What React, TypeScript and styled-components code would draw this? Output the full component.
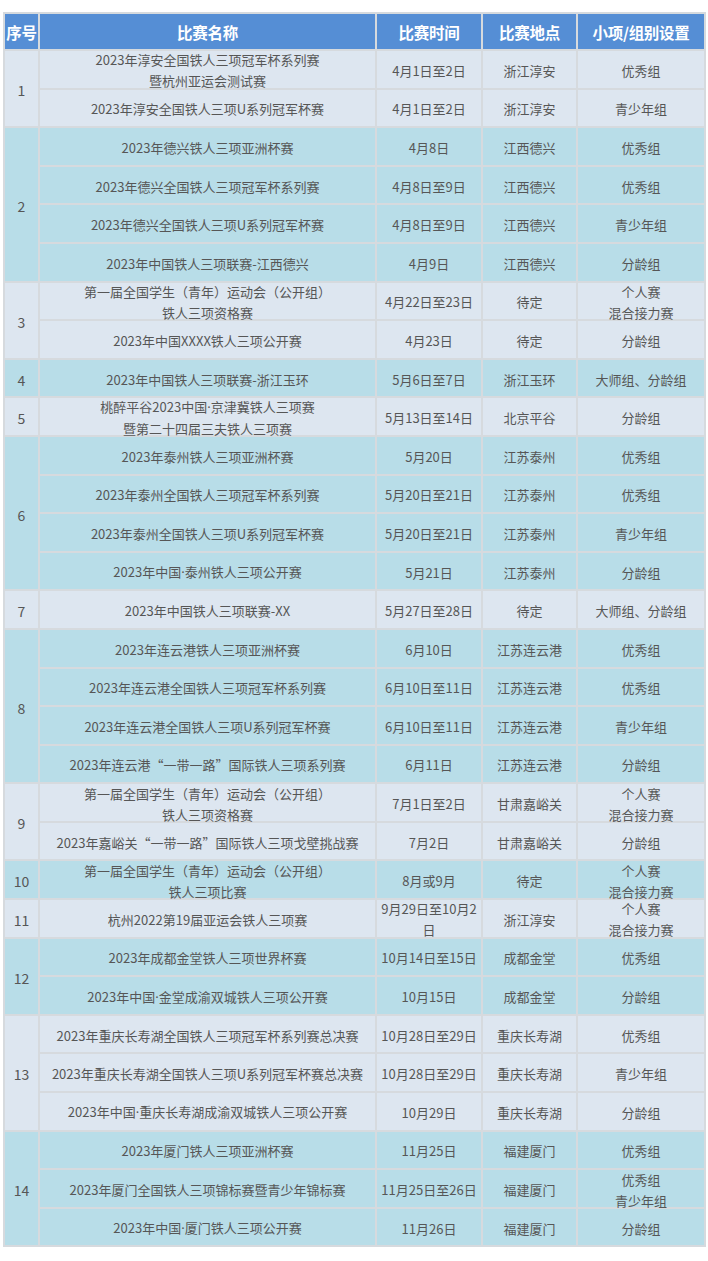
import styled, { createGlobalStyle } from "styled-components";

type Race = [string, string, string, string];
type Group = { no: number; tone: "gray" | "blue"; rows: Race[] };

const groups: Group[] = [
  {
    no: 1,
    tone: "gray",
    rows: [
      ["2023年淳安全国铁人三项冠军杯系列赛\n暨杭州亚运会测试赛", "4月1日至2日", "浙江淳安", "优秀组"],
      ["2023年淳安全国铁人三项U系列冠军杯赛", "4月1日至2日", "浙江淳安", "青少年组"],
    ],
  },
  {
    no: 2,
    tone: "blue",
    rows: [
      ["2023年德兴铁人三项亚洲杯赛", "4月8日", "江西德兴", "优秀组"],
      ["2023年德兴全国铁人三项冠军杯系列赛", "4月8日至9日", "江西德兴", "优秀组"],
      ["2023年德兴全国铁人三项U系列冠军杯赛", "4月8日至9日", "江西德兴", "青少年组"],
      ["2023年中国铁人三项联赛-江西德兴", "4月9日", "江西德兴", "分龄组"],
    ],
  },
  {
    no: 3,
    tone: "gray",
    rows: [
      ["第一届全国学生（青年）运动会（公开组）\n铁人三项资格赛", "4月22日至23日", "待定", "个人赛\n混合接力赛"],
      ["2023年中国XXXX铁人三项公开赛", "4月23日", "待定", "分龄组"],
    ],
  },
  {
    no: 4,
    tone: "blue",
    rows: [["2023年中国铁人三项联赛-浙江玉环", "5月6日至7日", "浙江玉环", "大师组、分龄组"]],
  },
  {
    no: 5,
    tone: "gray",
    rows: [["桃醉平谷2023中国·京津冀铁人三项赛\n暨第二十四届三夫铁人三项赛", "5月13日至14日", "北京平谷", "分龄组"]],
  },
  {
    no: 6,
    tone: "blue",
    rows: [
      ["2023年泰州铁人三项亚洲杯赛", "5月20日", "江苏泰州", "优秀组"],
      ["2023年泰州全国铁人三项冠军杯系列赛", "5月20日至21日", "江苏泰州", "优秀组"],
      ["2023年泰州全国铁人三项U系列冠军杯赛", "5月20日至21日", "江苏泰州", "青少年组"],
      ["2023年中国·泰州铁人三项公开赛", "5月21日", "江苏泰州", "分龄组"],
    ],
  },
  {
    no: 7,
    tone: "gray",
    rows: [["2023年中国铁人三项联赛-XX", "5月27日至28日", "待定", "大师组、分龄组"]],
  },
  {
    no: 8,
    tone: "blue",
    rows: [
      ["2023年连云港铁人三项亚洲杯赛", "6月10日", "江苏连云港", "优秀组"],
      ["2023年连云港全国铁人三项冠军杯系列赛", "6月10日至11日", "江苏连云港", "优秀组"],
      ["2023年连云港全国铁人三项U系列冠军杯赛", "6月10日至11日", "江苏连云港", "青少年组"],
      ["2023年连云港“一带一路”国际铁人三项系列赛", "6月11日", "江苏连云港", "分龄组"],
    ],
  },
  {
    no: 9,
    tone: "gray",
    rows: [
      ["第一届全国学生（青年）运动会（公开组）\n铁人三项资格赛", "7月1日至2日", "甘肃嘉峪关", "个人赛\n混合接力赛"],
      ["2023年嘉峪关“一带一路”国际铁人三项戈壁挑战赛", "7月2日", "甘肃嘉峪关", "分龄组"],
    ],
  },
  {
    no: 10,
    tone: "blue",
    rows: [["第一届全国学生（青年）运动会（公开组）\n铁人三项比赛", "8月或9月", "待定", "个人赛\n混合接力赛"]],
  },
  {
    no: 11,
    tone: "gray",
    rows: [["杭州2022第19届亚运会铁人三项赛", "9月29日至10月2日", "浙江淳安", "个人赛\n混合接力赛"]],
  },
  {
    no: 12,
    tone: "blue",
    rows: [
      ["2023年成都金堂铁人三项世界杯赛", "10月14日至15日", "成都金堂", "优秀组"],
      ["2023年中国·金堂成渝双城铁人三项公开赛", "10月15日", "成都金堂", "分龄组"],
    ],
  },
  {
    no: 13,
    tone: "gray",
    rows: [
      ["2023年重庆长寿湖全国铁人三项冠军杯系列赛总决赛", "10月28日至29日", "重庆长寿湖", "优秀组"],
      ["2023年重庆长寿湖全国铁人三项U系列冠军杯赛总决赛", "10月28日至29日", "重庆长寿湖", "青少年组"],
      ["2023年中国·重庆长寿湖成渝双城铁人三项公开赛", "10月29日", "重庆长寿湖", "分龄组"],
    ],
  },
  {
    no: 14,
    tone: "blue",
    rows: [
      ["2023年厦门铁人三项亚洲杯赛", "11月25日", "福建厦门", "优秀组"],
      ["2023年厦门全国铁人三项锦标赛暨青少年锦标赛", "11月25日至26日", "福建厦门", "优秀组\n青少年组"],
      ["2023年中国·厦门铁人三项公开赛", "11月26日", "福建厦门", "分龄组"],
    ],
  },
];

const GlobalStyle = createGlobalStyle`
  body {
    margin: 0;
    background: #ffffff;
    font-family: "Noto Sans CJK SC", "Noto Sans", sans-serif;
  }
`;

const Page = styled.div`
  padding: 12px 4px 0 3px;
`;

const Table = styled.table`
  width: 701px;
  table-layout: fixed;
  border-collapse: collapse;
  border: 2px solid #d6dade;
`;

const Head = styled.th`
  height: 35px;
  padding: 0;
  background: #558ed5;
  color: #ffffff;
  font-size: 15.5px;
  font-weight: 700;
  text-align: center;
  border: 2px solid #d6dade;
  letter-spacing: -0.3px;
`;

const Cell = styled.td<{ $tone: "gray" | "blue" }>`
  padding: 0;
  background: ${(p) => (p.$tone === "blue" ? "#b8dde8" : "#dde6f0")};
  color: #565656;
  font-size: 13px;
  text-align: center;
  border: 2px solid #d6dade;
  vertical-align: middle;
`;

const Inner = styled.div`
  height: 36.6px;
  padding: 2px 2px 0;
  box-sizing: border-box;
  display: flex;
  flex-direction: column;
  align-items: center;
  justify-content: center;
  line-height: 21px;
  overflow: visible;
`;

const NoCell = styled(Cell)`
  font-size: 14px;
  padding-top: 3px;
`;

// narrow latin middle dot, the CJK font draws it full width
const Dot = styled.span`
  font-family: "Noto Sans", sans-serif;
`;

function Line({ text }: { text: string }) {
  const parts = text.split("·");
  return (
    <span>
      {parts.map((p, i) => (
        <span key={i}>
          {i > 0 && <Dot>·</Dot>}
          {p}
        </span>
      ))}
    </span>
  );
}

function Lines({ text }: { text: string }) {
  return (
    <Inner>
      {text.split("\n").map((l, i) => (
        <Line key={i} text={l} />
      ))}
    </Inner>
  );
}

export default function App() {
  return (
    <Page>
      <GlobalStyle />
      <Table>
        <colgroup>
          <col style={{ width: 35 }} />
          <col style={{ width: 337 }} />
          <col style={{ width: 106 }} />
          <col style={{ width: 95 }} />
          <col style={{ width: 128 }} />
        </colgroup>
        <thead>
          <tr>
            <Head>序号</Head>
            <Head>比赛名称</Head>
            <Head>比赛时间</Head>
            <Head>比赛地点</Head>
            <Head>小项/组别设置</Head>
          </tr>
        </thead>
        <tbody>
          {groups.map((g) =>
            g.rows.map((r, i) => (
              <tr key={`${g.no}-${i}`}>
                {i === 0 && (
                  <NoCell $tone={g.tone} rowSpan={g.rows.length}>
                    {g.no}
                  </NoCell>
                )}
                {r.map((t, j) => (
                  <Cell key={j} $tone={g.tone}>
                    <Lines text={t} />
                  </Cell>
                ))}
              </tr>
            ))
          )}
        </tbody>
      </Table>
    </Page>
  );
}
